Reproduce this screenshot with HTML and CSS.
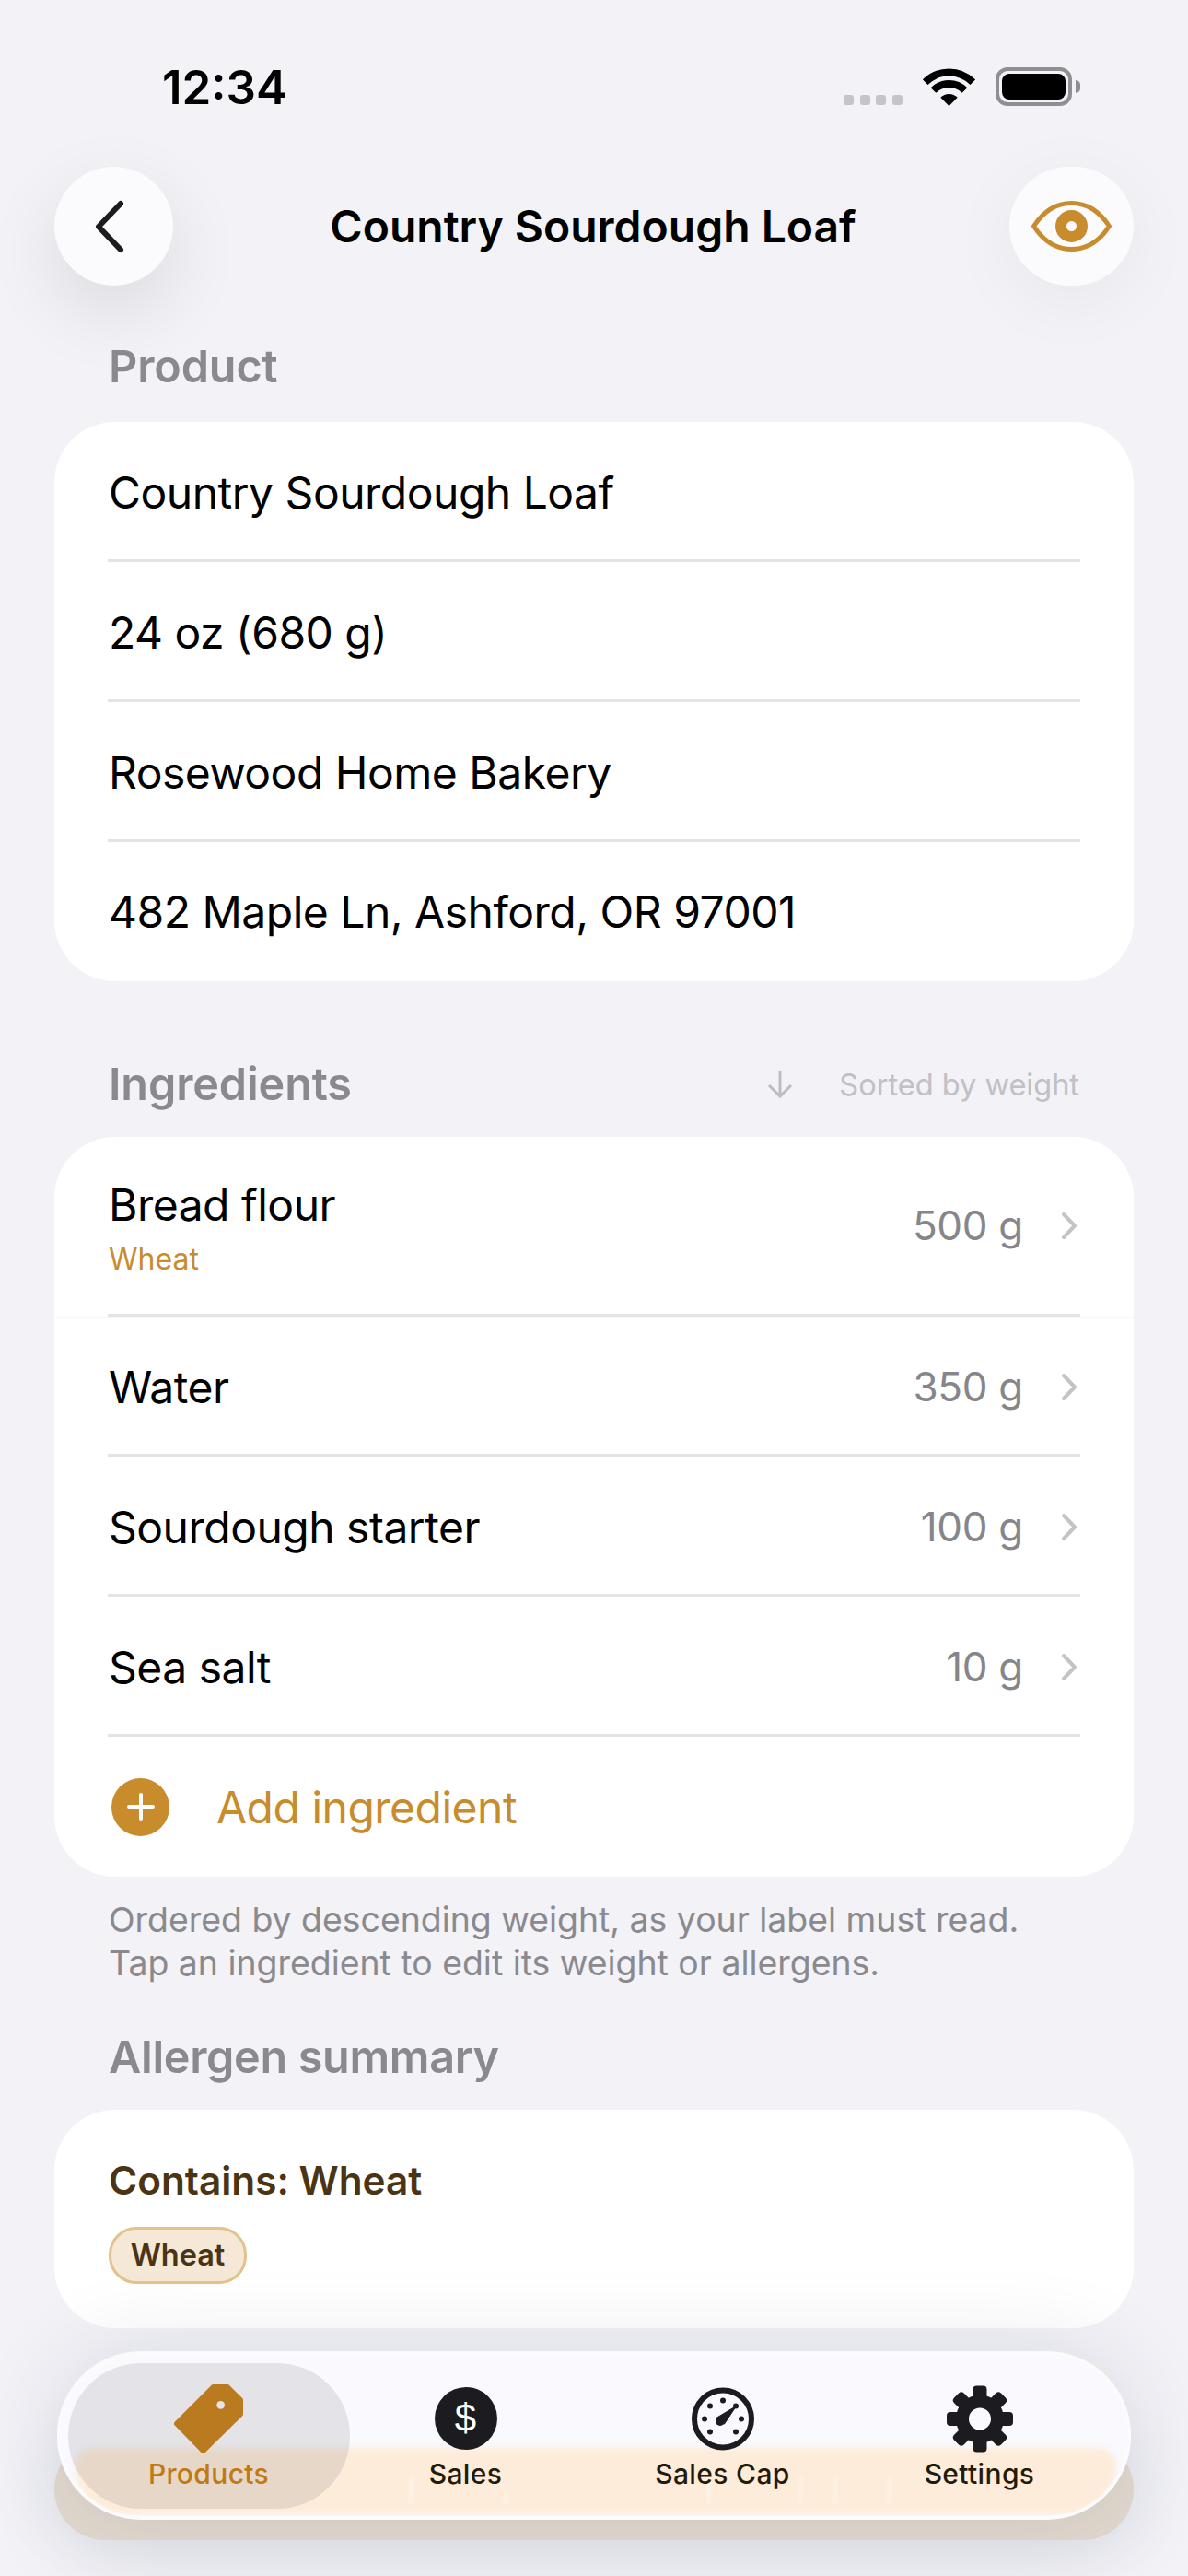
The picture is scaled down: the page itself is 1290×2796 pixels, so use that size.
FILE: index.html
```html
<!DOCTYPE html>
<html lang="en">
<head>
<meta charset="utf-8">
<title>Country Sourdough Loaf</title>
<link rel="stylesheet" href="styles.css">
</head>
<body>
<div class="screen">
  <div class="status">
    <span class="time">12:34</span>
    <div class="status-icons">
      <div class="signal"><i></i><i></i><i></i><i></i></div>
      <svg class="wifi" width="57" height="41" viewBox="0 0 57 41"><path d="M2.7 15.2A36.5 36.5 0 0 1 54.3 15.2M11.5 24A24 24 0 0 1 45.5 24" fill="none" stroke="#000" stroke-width="8"/><path d="M28.5 41L19.3 31.8A13 13 0 0 1 37.7 31.8Z"/></svg>
      <div class="battery"><div class="battery-fill"></div></div>
    </div>
  </div>

  <header class="nav">
    <button class="round back"><svg width="34" height="58" viewBox="0 0 34 58"><path d="M29 4L5 29L29 54" fill="none" stroke="#1c1c1e" stroke-width="6" stroke-linecap="round" stroke-linejoin="round"/></svg></button>
    <h1 class="title">Country Sourdough Loaf</h1>
    <button class="round eye"><svg width="87" height="55" viewBox="0 0 87 55"><path d="M2.5 27.5C14 10 28 2.5 43.5 2.5S73 10 84.5 27.5C73 45 59 52.5 43.5 52.5S14 45 2.5 27.5Z" fill="none" stroke="#c88c2c" stroke-width="5" stroke-linejoin="round"/><circle cx="43.5" cy="27.5" r="11.5" fill="none" stroke="#c88c2c" stroke-width="12"/></svg></button>
  </header>

  <h2 class="section-label first">Product</h2>
  <section class="card">
    <div class="row"><span class="name">Country Sourdough Loaf</span></div>
    <div class="row"><span class="name">24 oz (680 g)</span></div>
    <div class="row"><span class="name">Rosewood Home Bakery</span></div>
    <div class="row last"><span class="name">482 Maple Ln, Ashford, OR 97001</span></div>
  </section>

  <div class="section-head">
    <h2 class="section-label inline">Ingredients</h2>
    <div class="sort">
      <svg width="28" height="30" viewBox="0 0 28 30"><path d="M14 1V28M2 16L14 28L26 16" fill="none" stroke="#bcbcc2" stroke-width="3"/></svg>
      <span>Sorted by weight</span>
    </div>
  </div>
  <section class="card">
    <div class="row-wrap">
      <div class="row tall">
        <div class="stack"><span class="name">Bread flour</span><span class="allergen">Wheat</span></div>
        <span class="value">500 g</span>
        <svg class="chev" width="19" height="31" viewBox="0 0 19 31"><path d="M3 3L15 15.5L3 28" fill="none" stroke="#c4c4c7" stroke-width="4" stroke-linecap="round" stroke-linejoin="round"/></svg>
      </div>
    </div>
    <div class="row"><span class="name">Water</span><span class="value">350 g</span><svg class="chev" width="19" height="31" viewBox="0 0 19 31"><path d="M3 3L15 15.5L3 28" fill="none" stroke="#c4c4c7" stroke-width="4" stroke-linecap="round" stroke-linejoin="round"/></svg></div>
    <div class="row"><span class="name">Sourdough starter</span><span class="value">100 g</span><svg class="chev" width="19" height="31" viewBox="0 0 19 31"><path d="M3 3L15 15.5L3 28" fill="none" stroke="#c4c4c7" stroke-width="4" stroke-linecap="round" stroke-linejoin="round"/></svg></div>
    <div class="row"><span class="name">Sea salt</span><span class="value">10 g</span><svg class="chev" width="19" height="31" viewBox="0 0 19 31"><path d="M3 3L15 15.5L3 28" fill="none" stroke="#c4c4c7" stroke-width="4" stroke-linecap="round" stroke-linejoin="round"/></svg></div>
    <div class="row last add">
      <span class="add-dot"><svg width="30" height="30" viewBox="0 0 30 30"><path d="M15 2V28M2 15H28" stroke="#fff" stroke-width="4" stroke-linecap="round"/></svg></span>
      <span class="add-text">Add ingredient</span>
    </div>
  </section>
  <p class="note">Ordered by descending weight, as your label must read.<br>Tap an ingredient to edit its weight or allergens.</p>

  <h2 class="section-label third">Allergen summary</h2>
  <section class="card summary">
    <div class="contains">Contains: Wheat</div>
    <span class="chip">Wheat</span>
  </section>

  <div class="under-pill"></div>
  <nav class="tabbar">
    <div class="band"></div>
    <div class="ghost"></div>
    <div class="tab active">
      <svg width="75" height="75" viewBox="0 0 225 225"><path d="M128 8H174L217 51V97L95 217L8 128Z" fill="#b97a20" stroke="#b97a20" stroke-width="16" stroke-linejoin="round"/><circle cx="152" cy="67" r="13" fill="#e4e5ea"/></svg>
      <span>Products</span>
    </div>
    <div class="tab">
      <span class="dollar">$</span>
      <span>Sales</span>
    </div>
    <div class="tab">
      <svg width="70" height="70" viewBox="0 0 70 70"><circle cx="35" cy="35" r="31" fill="none" stroke="#1c1c20" stroke-width="6"/><g fill="#1c1c20"><circle cx="35" cy="15" r="3"/><circle cx="21" cy="21" r="3"/><circle cx="15" cy="35" r="3"/><circle cx="21" cy="49" r="3"/><circle cx="49" cy="49" r="3"/><circle cx="55" cy="35" r="3"/><circle cx="49" cy="21" r="3"/><path d="M49.5 21L36.5 40.5L28.5 33.5Z" stroke="#1c1c20" stroke-width="1" stroke-linejoin="round"/><circle cx="32" cy="37.5" r="5"/></g></svg>
      <span>Sales Cap</span>
    </div>
    <div class="tab">
      <svg width="72" height="72" viewBox="-36 -36 72 72"><circle r="19" fill="none" stroke="#1c1c20" stroke-width="14"/><g fill="#1c1c20"><rect x="-7.5" y="-36" width="15" height="16" rx="4"/><rect x="-7.5" y="-36" width="15" height="16" rx="4" transform="rotate(45)"/><rect x="-7.5" y="-36" width="15" height="16" rx="4" transform="rotate(90)"/><rect x="-7.5" y="-36" width="15" height="16" rx="4" transform="rotate(135)"/><rect x="-7.5" y="-36" width="15" height="16" rx="4" transform="rotate(180)"/><rect x="-7.5" y="-36" width="15" height="16" rx="4" transform="rotate(225)"/><rect x="-7.5" y="-36" width="15" height="16" rx="4" transform="rotate(270)"/><rect x="-7.5" y="-36" width="15" height="16" rx="4" transform="rotate(315)"/></g></svg>
      <span>Settings</span>
    </div>
  </nav>
</div>
</body>
</html>
```

FILE: styles.css
```css
* { box-sizing: border-box; }
html, body { margin: 0; padding: 0; }
body { background: #f2f2f7; font-family: Inter, "Liberation Sans", sans-serif; color: #000; }
.screen { position: relative; width: 1290px; height: 2796px; overflow: hidden; background: #f2f2f7; }

.status { height: 181px; display: flex; justify-content: space-between; align-items: flex-start; padding: 64px 118px 0 176px; }
.time { font-size: 51px; font-weight: 600; line-height: 62px; letter-spacing: 0; }
.status-icons { display: flex; align-items: flex-end; gap: 22px; padding-top: 9px; }
.signal { display: flex; gap: 6.6px; padding-bottom: 1px; }
.signal i { width: 11px; height: 11px; border-radius: 3px; background: #c4c4c9; }
.wifi { display: block; }
.battery { position: relative; width: 83px; height: 42px; border: 4px solid #8e8e93; border-radius: 13px; padding: 3px; margin-right: 8px; }
.battery::after { content: ""; position: absolute; right: -13px; top: 10px; width: 5px; height: 14px; background: #8e8e93; border-radius: 0 5px 5px 0; }
.battery-fill { width: 100%; height: 100%; background: #000; border-radius: 8px; }

.nav { height: 129px; padding: 0 59px; display: flex; align-items: center; }
.round { height: 129px; border: 0; padding: 0; border-radius: 65px; background: #fbfbfe; display: flex; align-items: center; justify-content: center; flex: none; }
.back { width: 129px; box-shadow: 0 28px 80px rgba(0,0,0,.1); padding-right: 10px; }
.eye { width: 135px; box-shadow: 0 16px 80px rgba(0,0,0,.05); }
.title { flex: 1; margin: 0; text-align: center; font-size: 48px; font-weight: 600; padding-left: 4px; }

.section-label { margin: 0; height: 60px; line-height: 60px; padding-left: 118px; font-size: 48.5px; font-weight: 600; letter-spacing: -.1px; color: #8a8a8e; }
.section-label.first { margin-top: 58px; margin-bottom: 30px; position: relative; }
.section-label.inline { padding-left: 0; }
.section-label.third { margin-top: 49px; margin-bottom: 27px; letter-spacing: -.3px; }
.section-head { margin: 82px 59px 27px; padding: 0 59px; height: 60px; display: flex; justify-content: space-between; align-items: center; }
.sort { display: flex; align-items: center; gap: 50px; font-size: 32.5px; color: #c0c0c5; }
.sort svg { display: block; }

.card { margin: 0 59px; background: #fff; border-radius: 66px; position: relative; }
.row { margin: 0 58px; height: 152px; border-bottom: 3px solid #e4e4e7; display: flex; align-items: center; font-size: 48px; letter-spacing: -.5px; padding-left: 1px; padding-top: 3px; }
.row.last { border-bottom: 0; height: 151px; padding-top: 0; }
.row.add { height: 152px; }
.row.tall { height: 195px; padding-top: 0; }
.row-wrap { border-bottom: 2px solid #f6f6f8; margin-bottom: -2px; position: relative; }
.name { flex: 1; }
.stack { flex: 1; display: flex; flex-direction: column; margin-top: 4px; }
.stack .name { flex: none; line-height: 60px; }
.allergen { font-size: 32px; line-height: 40px; margin-top: 9px; letter-spacing: 0; color: #c88c2c; }
.value { font-size: 44px; letter-spacing: -.3px; color: #86868a; margin-right: 41px; }
.chev { flex: none; margin-right: 2px; }

.add-dot { width: 63px; height: 63px; margin-left: 3px; border-radius: 50%; background: #c88c2c; display: flex; align-items: center; justify-content: center; flex: none; }
.add-text { margin-left: 51px; color: #c88c2c; }

.note { margin: 23px 0 0; padding-left: 118px; font-size: 37.4px; line-height: 47px; color: #8a8a8e; }

.summary { height: 237px; padding: 53px 59px 0; }
.contains { font-size: 42.3px; font-weight: 600; line-height: 48px; color: #4a3414; }
.chip { display: inline-block; margin-top: 26px; height: 62px; line-height: 56px; width: 150px; text-align: center; font-size: 32.5px; font-weight: 600; color: #4a3414; background: #f5e8d6; border: 3px solid #e3c38d; border-radius: 30px; }

.under-pill { position: absolute; left: 59px; width: 1172px; top: 2647px; height: 110px; border-radius: 60px; background: #e2d9ce; box-shadow: 0 10px 80px rgba(40,40,70,.1); }
.tabbar { position: absolute; left: 62px; top: 2553px; width: 1166px; height: 182px; border-radius: 91px; background: #f9f9fe; border: 4px solid #fbfbff; box-shadow: 0 -1px 0 #fdfbee, 0 0 100px rgba(40,40,70,.12); overflow: hidden; display: flex; padding-left: 21px; }
.band { position: absolute; left: 16px; right: 12px; top: 100px; height: 72px; background: #fdecd9; border-radius: 30px 30px 80px 80px; filter: blur(3px); }
.ghost { position: absolute; left: 378px; top: 132px; width: 525px; height: 28px; opacity: .3;
  background-image: linear-gradient(#fff,#fff), linear-gradient(#fff,#fff), linear-gradient(#fff,#fff), linear-gradient(#fff,#fff), linear-gradient(#fff,#fff), linear-gradient(#fff,#fff);
  background-repeat: no-repeat;
  background-size: 6px 28px, 5px 10px, 5px 28px, 4px 28px, 4px 28px, 4px 28px;
  background-position: 0 0, 103px 18px, 323px 0, 423px 0, 461px 0, 520px 0;
  filter: blur(1.5px); }
.tab { position: relative; width: 279px; flex: none; display: flex; flex-direction: column; align-items: center; padding-top: 31px; font-size: 30px; font-weight: 500; letter-spacing: .35px; color: #241a0c; }
.tab svg, .tab .dollar { display: block; flex: none; height: 75px; }
.tab > span:last-child { line-height: 40px; margin-top: 2px; position: relative; }
.tab svg { height: 75px; }
.tab.active { color: #c07a14; }
.tab.active::before { content: ""; position: absolute; left: -13px; right: -14px; top: 8px; height: 158px; border-radius: 79px; background: rgba(100,100,110,.148); }
.tab.active svg { position: relative; }
.dollar { width: 68px; height: 68px !important; margin: 3px 0 4px; border-radius: 50%; background: #1c1c20; color: #fff; font-family: "Liberation Sans", sans-serif; font-size: 42px; font-weight: 400; line-height: 68px; text-align: center; letter-spacing: 0; }
```
